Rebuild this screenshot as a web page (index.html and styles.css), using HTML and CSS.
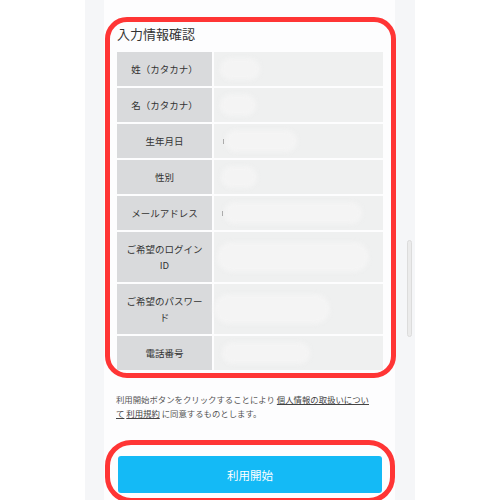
FILE: index.html
```html
<!DOCTYPE html>
<html lang="ja">
<head>
    <meta charset="UTF-8">
    <meta name="viewport" content="width=device-width, initial-scale=1.0">
    <title>入力情報確認</title>
    <link rel="stylesheet" href="styles.css">
</head>
<body>
    <div class="frame">
        <div class="panel">
            <div class="confirm">
                <h2 class="confirm_title">入力情報確認</h2>
                <div class="info_table">
                    <div class="label">姓（カタカナ）</div>
                    <div class="value"><span class="blur" style="margin-left:6px;width:40px"></span></div>

                    <div class="label">名（カタカナ）</div>
                    <div class="value"><span class="blur" style="margin-left:6px;width:36px"></span></div>

                    <div class="label">生年月日</div>
                    <div class="value"><span class="dot" style="margin-left:9px"></span><span class="blur" style="width:72px"></span></div>

                    <div class="label">性別</div>
                    <div class="value"><span class="blur" style="margin-left:7px;width:36px"></span></div>

                    <div class="label">メールアドレス</div>
                    <div class="value"><span class="dot" style="margin-left:8px"></span><span class="blur" style="width:138px"></span></div>

                    <div class="label">ご希望のログインID</div>
                    <div class="value"><span class="blur tall" style="margin-left:3px;width:152px"></span></div>

                    <div class="label">ご希望のパスワード</div>
                    <div class="value"><span class="blur tall" style="width:116px"></span></div>

                    <div class="label">電話番号</div>
                    <div class="value"><span class="blur" style="margin-left:8px;width:88px"></span></div>
                </div>
            </div>

            <p class="agree">
                利用開始ボタンをクリックすることにより <a href="javascript:;">個人情報の取扱いについて</a> <a href="javascript:;">利用規約</a> に同意するものとします。
            </p>

            <div class="start_wrap">
                <button class="start_btn">利用開始</button>
            </div>
        </div>
        <div class="rail">
            <div class="thumb"></div>
        </div>
    </div>
</body>
</html>
```

FILE: styles.css
```css
*{
    margin: 0;
    padding: 0;
    box-sizing: border-box;
}

body{
    background-color: #fff;
    font-family: "Noto Sans CJK JP", "Noto Sans", sans-serif;
    color: #333;
}

.frame{
    display: flex;
    width: 330px;
    height: 500px;
    margin-left: 85px;
    padding-left: 19px;
    background-color: #f5f6f8;
    overflow: hidden;
}

.panel{
    flex: none;
    width: 291px;
    background-color: #fdfdfe;
}

.rail{
    flex: 1;
    padding: 240px 0 0 12px;
}

.rail .thumb{
    width: 5px;
    height: 97px;
    background-color: #ebebeb;
    border: 1px solid #dcdcdc;
    border-radius: 3px;
}

.confirm{
    width: 291px;
    margin: 17px 0 0 1px;
    padding: 3px 8px 3px 7px;
    border: 5px solid #ff3535;
    border-radius: 22px;
}

.confirm_title{
    font-size: 13px;
    line-height: 18px;
    font-weight: normal;
    color: #333;
    margin-bottom: 9px;
}

.info_table{
    display: grid;
    grid-template-columns: 95px 1fr;
    gap: 2px;
    background-color: #fdfdfe;
}

.info_table .label{
    display: flex;
    align-items: center;
    justify-content: center;
    padding: 9px 6px;
    background-color: #d9dadc;
    font-size: 9.5px;
    line-height: 16px;
    text-align: center;
    color: #333;
}

.info_table .value{
    display: flex;
    align-items: center;
    background-color: #eff0f0;
}

.value .blur{
    display: block;
    height: 22px;
    border-radius: 11px;
    background-color: #f4f4f4;
    filter: blur(2px);
}

.value .blur.tall{
    height: 30px;
    border-radius: 15px;
}

.value .dot{
    display: block;
    width: 1px;
    height: 5px;
    margin-right: 1px;
    background-color: #999;
}

.agree{
    margin-top: 15px;
    padding: 0 22px 0 12px;
    font-size: 8.4px;
    line-height: 13.5px;
    color: #555;
}

.agree a{
    color: #444;
    text-decoration: underline;
}

.start_wrap{
    width: 290px;
    margin: 20px 0 0 1px;
    padding: 11px 8px 5px;
    border: 5px solid #ff3535;
    border-radius: 26px;
}

.start_btn{
    display: block;
    width: 100%;
    height: 37px;
    border: none;
    border-radius: 3px;
    background-color: #14baf6;
    color: #fff;
    font-family: "Noto Sans CJK JP", sans-serif;
    font-size: 11.5px;
    cursor: pointer;
}
```
